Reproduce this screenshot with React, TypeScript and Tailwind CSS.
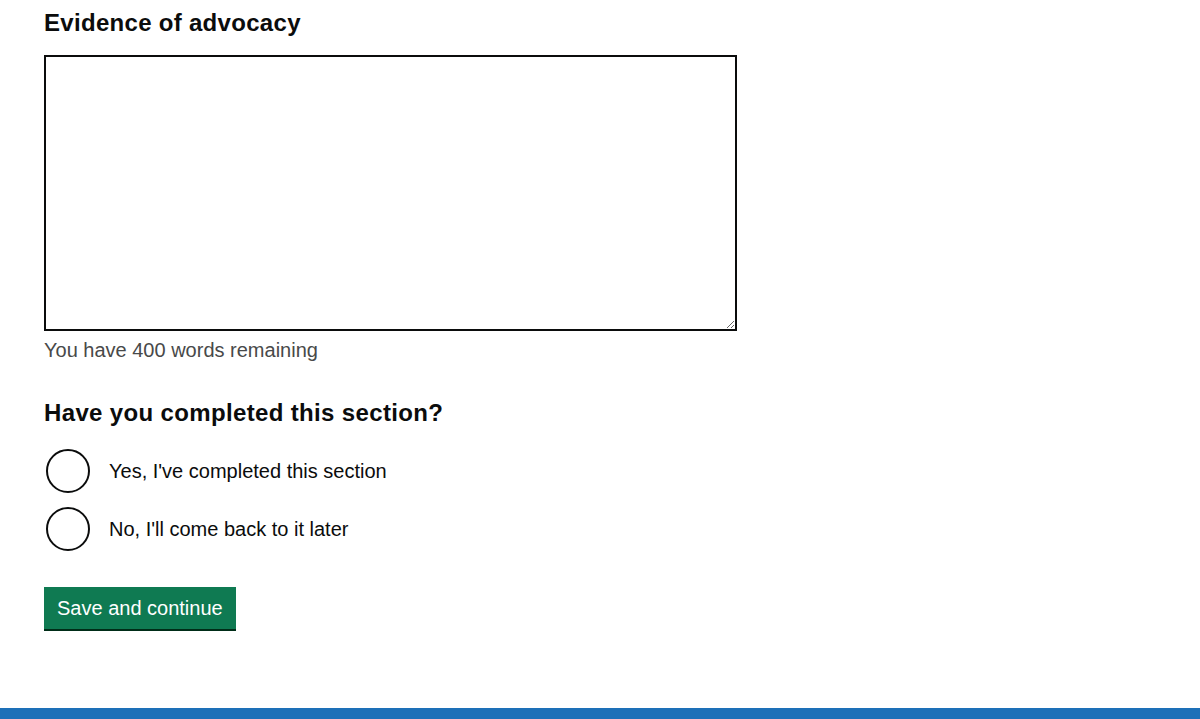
export default function App() {
  const options = ["Yes, I've completed this section", "No, I'll come back to it later"];

  return (
    <div className="min-h-screen flex flex-col bg-white text-[#0b0c0c] font-['Liberation_Sans',Arial,sans-serif]">
      <main className="flex-1 pl-[44px] pt-[8px]">
        <label htmlFor="evidence" className="block text-[24px] leading-[30px] font-bold tracking-[0.3px] mb-[17px]">
          Evidence of advocacy
        </label>
        <textarea
          id="evidence"
          className="block w-[693px] h-[276px] border-2 border-[#0b0c0c] p-[5px] text-[20px] outline-none"
        />
        <p className="mt-[7px] text-[20px] leading-[25px] text-[#484949]">You have 400 words remaining</p>

        <fieldset className="mt-[35px]">
          <legend className="text-[24px] leading-[30px] font-bold tracking-[0.35px] mb-[21px]">
            Have you completed this section?
          </legend>
          <div className="flex flex-col gap-[14px]">
            {options.map((opt) => (
              <label key={opt} className="flex items-center h-[44px] cursor-pointer">
                <span className="w-[44px] h-[44px] ml-[2px] rounded-full border-2 border-[#0b0c0c] shrink-0" />
                <input type="radio" name="completed" className="sr-only" />
                <span className="ml-[19px] text-[20px] leading-[25px]">{opt}</span>
              </label>
            ))}
          </div>
        </fieldset>

        <button className="mt-[36px] h-[42px] px-[13px] bg-[#0f7a52] text-white text-[20px] leading-[25px] shadow-[0_2px_0_#002d18]">
          Save and continue
        </button>
      </main>
      <div className="h-[11px] bg-[#1d70b8]" />
    </div>
  );
}
